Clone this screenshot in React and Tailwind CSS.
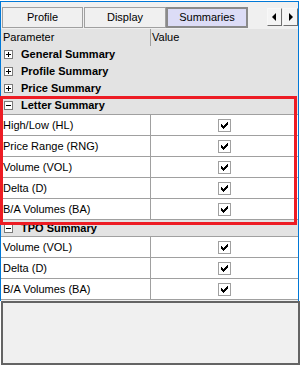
import React from 'react';

const letterRows = ['High/Low (HL)', 'Price Range (RNG)', 'Volume (VOL)', 'Delta (D)', 'B/A Volumes (BA)'];
const tpoRows = ['Volume (VOL)', 'Delta (D)', 'B/A Volumes (BA)'];

// classic 7x7 check glyph
const checkBits = ['......X', '.....XX', 'X...XXX', 'XX.XXX.', 'XXXXX..', '.XXX...', '..X....'];

function ExpandBox({ open }) {
  return (
    <svg width="9" height="9" viewBox="0 0 9 9" className="shrink-0" shapeRendering="crispEdges">
      <rect x="0.5" y="0.5" width="8" height="8" fill="#fff" stroke="#7a7a7a" />
      <line x1="2" y1="4.5" x2="7" y2="4.5" stroke="#000" />
      {!open && <line x1="4.5" y1="2" x2="4.5" y2="7" stroke="#000" />}
    </svg>
  );
}

function Check() {
  return (
    <svg width="13" height="13" viewBox="0 0 13 13" shapeRendering="crispEdges">
      <rect x="0.5" y="0.5" width="12" height="12" fill="#fff" stroke="#a0a0a0" />
      {checkBits.map((row, y) =>
        row.split('').map((c, x) =>
          c === 'X' ? <rect key={`${x}-${y}`} x={x + 3} y={y + 3} width="1" height="1" fill="#000" /> : null
        )
      )}
    </svg>
  );
}

function Category({ label, open, h = 'h-[17px]' }) {
  return (
    <div className={`${h} flex items-center bg-[#e3e3e3] pl-[3px]`}>
      <ExpandBox open={open} />
      <span className="ml-[8px] text-[11px] font-bold text-black leading-none">{label}</span>
    </div>
  );
}

function Item({ label }) {
  return (
    <div className="h-[21px] flex border-t border-[#a0a0a0] bg-white">
      <div className="w-[150px] border-r border-[#a0a0a0] flex items-center pl-[2px] text-[11px] text-black">{label}</div>
      <div className="flex-1 flex items-center justify-center pr-px">
        <Check />
      </div>
    </div>
  );
}

function Tab({ label, active, w }) {
  return (
    <div
      className={`${w} h-[21px] flex items-center justify-center text-[11px] text-black ${
        active ? 'bg-[#dcdcf6] border-2 border-[#8a8a8a]' : 'bg-[#f0f0f0] border border-[#a0a0a0]'
      }`}
    >
      {label}
    </div>
  );
}

function ScrollBtn({ dir }) {
  return (
    <div className="w-[15px] h-[18px] bg-[#f4f4f4] border border-[#f8f8f8] border-r-[#6f6f6f] border-b-[#6f6f6f] flex items-center justify-center">
      <svg width="5" height="8" viewBox="0 0 5 8">
        {dir === 'left' ? <path d="M4 0V8L0 4z" fill="#000" /> : <path d="M1 0V8L5 4z" fill="#000" />}
      </svg>
    </div>
  );
}

export default function App() {
  return (
    <div className="w-[300px] h-[366px] bg-white pt-px relative overflow-hidden" style={{ fontFamily: '"Liberation Sans", Arial, sans-serif' }}>
      <div className="w-[299px] h-[300px] border-t border-l border-r border-[#0078d7] bg-[#f0f0f0] flex flex-col">
        {/* tabs */}
        <div className="h-[26px] flex items-end pl-px">
          <Tab label="Profile" w="w-[81px]" />
          <div className="w-px" />
          <Tab label="Display" w="w-[82px]" />
          <Tab label="Summaries" w="w-[82px]" active />
          <div className="flex-1" />
          <div className="flex self-start mt-[6px] gap-px">
            <ScrollBtn dir="left" />
            <ScrollBtn dir="right" />
          </div>
        </div>

        {/* header */}
        <div className="h-[17px] flex bg-[#e3e3e3] text-[11px] text-black mt-px">
          <div className="w-[150px] border-r border-[#a0a0a0] flex items-center pl-[2px]">Parameter</div>
          <div className="flex-1 flex items-center pl-px">Value</div>
        </div>

        <Category label="General Summary" />
        <Category label="Profile Summary" />
        <Category label="Price Summary" />
        <Category label="Letter Summary" open />
        <div className="border-b border-[#a0a0a0]">
          {letterRows.map((r) => (
            <Item key={r} label={r} />
          ))}
        </div>
        <Category label="TPO Summary" open h="h-[16px]" />
        <div className="border-b border-[#a0a0a0]">
          {tpoRows.map((r) => (
            <Item key={'t' + r} label={r} />
          ))}
        </div>
      </div>

      {/* description panel */}
      <div className="ml-px w-[299px] h-[64px] bg-[#f0f0f0] border-2 border-[#646464]" />

      {/* highlight */}
      <div className="absolute left-0 top-[96px] w-[297px] h-[129px] border-[3px] border-[#ed1c24] pointer-events-none" />
    </div>
  );
}
